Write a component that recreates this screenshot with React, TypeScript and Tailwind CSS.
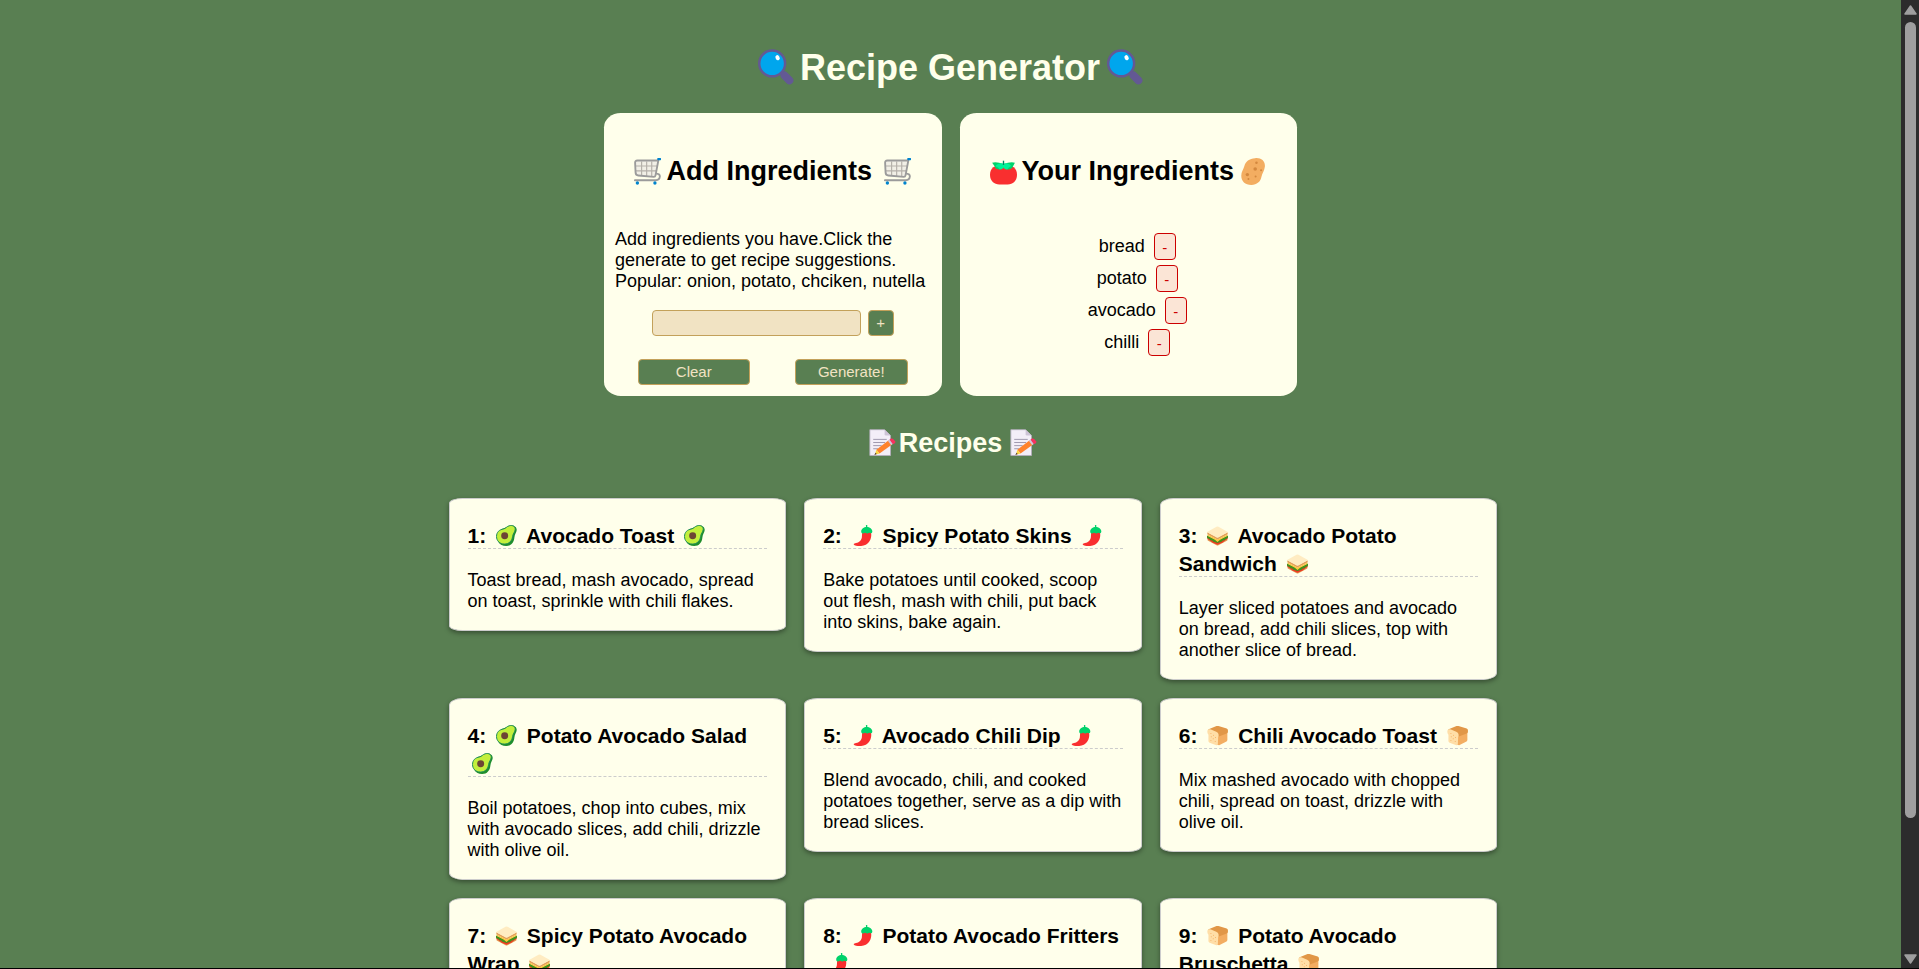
import type { ReactNode } from "react";

type IconProps = { className?: string };

function Svg({ className = "", children }: { className?: string; children: ReactNode }) {
  return (
    <svg viewBox="0 0 32 32" fill="none" className={`shrink-0 ${className}`} aria-hidden="true">
      {children}
    </svg>
  );
}

function Magnifier({ className }: IconProps) {
  return (
    <Svg className={className}>
      <path d="M21 21l2.6 2.6" stroke="#635994" strokeWidth="3" />
      <path d="M23.6 23.6l4.3 4.3" stroke="#635994" strokeWidth="7" strokeLinecap="round" />
      <circle cx="12.6" cy="12.8" r="11.5" fill="#00a6ed" stroke="#635994" strokeWidth="2.2" />
      <ellipse cx="17.4" cy="7.7" rx="1.8" ry="2.3" fill="#fff" transform="rotate(-30 17.4 7.7)" />
    </Svg>
  );
}

function Cart({ className }: IconProps) {
  return (
    <Svg className={className}>
      <path d="M2 3.5h26.5L26 22.3 5 20.6Q2.6 20.3 2.2 18Z" fill="#f1efe6" />
      <path
        d="M9 4v17M15 4v17.5M21 4v18M2 9.5h25.5M2.2 15.3h24.5"
        stroke="#b5b1aa"
        strokeWidth="1.4"
      />
      <path
        d="M28 3H4Q1.2 3 1.3 5.7l.6 12Q2.200 20.500 5 20.700l18.500 1.600q1.700 0 2-1.700L29.200 1.200"
        stroke="#9b9b9b"
        strokeWidth="2.200"
      />
      <path
        d="M27 18.500q4 .5 3.600 3.700-.5 4.200-4.600 4.200H1"
        stroke="#9b9b9b"
        strokeWidth="2.200"
        strokeLinecap="round"
      />
      <path d="M28.700 1.300h2.500" stroke="#0084ce" strokeWidth="2.600" strokeLinecap="round" />
      <circle cx="4" cy="29.700" r="2" fill="#0084ce" />
      <circle cx="24.800" cy="29.700" r="2" fill="#0084ce" />
    </Svg>
  );
}

function Tomato({ className }: IconProps) {
  return (
    <Svg className={className}>
      <path d="M0 20C0 12 5 8 16 8s16 4 16 12c0 7-5 11.300-11 11.300H11C5 31.300 0 27 0 20Z" fill="#f92f2f" />
      <path d="M2.500 5.500q6-1.300 13.500 1.800 7.500-3.100 13.500-1.800l-2 4q-1.500 4-6 4-3 .3-5.500-2.200-2.500 2.500-5.500 2.200-4.500 0-5-3.600Z" fill="#00d26a" />
      <path d="M16 6.500q6.500-1 9 3-3 1.500-4.500 4-3 .3-4.500-2.200-1.500 2.500-4.500 2.200-1.500-3-5-3.800 3-4.200 9.500-3.200Z" fill="#00f397" />
      <path d="M16 3.200v5" stroke="#008463" strokeWidth="1.600" />
    </Svg>
  );
}

function Potato({ className }: IconProps) {
  return (
    <Svg className={className}>
      <path
        d="M18 .2C25 -.5 30 3.5 29.5 10C29 15 26.5 17.5 25.5 22C24.500 28 20 32 13.500 32C6 32 1.500 27.500 1.500 21C1.500 16.500 4 13.500 5.200 9.500C6.500 4 11 .8 18 .2Z"
        fill="#f3ad61"
      />
      <g fill="#d3883e">
        <circle cx="19.500" cy="5.500" r="1.500" />
        <circle cx="18" cy="13" r="2.100" />
        <circle cx="25" cy="14.500" r="1.200" />
        <circle cx="8.700" cy="19.700" r="2" />
        <circle cx="18.500" cy="22" r="1.200" />
        <circle cx="10" cy="25" r="1.200" />
      </g>
    </Svg>
  );
}

function Memo({ className }: IconProps) {
  return (
    <Svg className={className}>
      <path d="M1 .8h17.500l7 7V31.400H1Z" fill="#f3eef8" stroke="#b4acbc" strokeWidth="1" />
      <path d="M18.500.8v5.500q0 1.500 1.500 1.500h5.500Z" fill="#cdc4d6" />
      <path d="M5 12.300h16M5 16h14M5 19.700h10M5 23.400h6" stroke="#9b93ab" strokeWidth="1.100" />
      <path d="M23.300 13.200l4 5.300L12.500 29 8.700 24.500Z" fill="#ff822d" />
      <path d="M8.700 24.500l3.800 4.500-5.500 1.500Z" fill="#fcd53f" />
      <path d="M7.800 28l1.300 1.700-2.800 1Z" fill="#402a32" />
      <path d="M22.300 13.900l2.200-1.600 4 5.300-2.200 1.600Z" fill="#d3c5dc" />
      <path d="M24.300 12.500l1.700-1.100q1.700-.7 2.900.6l2 2.500q.9 1.400-.4 2.400l-2.100 1.300Z" fill="#f8315f" />
    </Svg>
  );
}

function Avocado({ className }: IconProps) {
  return (
    <Svg className={className}>
      <path
        d="M22 1C27 -.2 32 3 31.500 8C31 12 28.500 14 28 19C27.500 26.500 23 32 15.500 32C10 32 6 30 3.500 26L9 6Z"
        fill="#1f8e2b"
      />
      <path
        d="M20 1.200C25 -.2 29.500 2 29.300 6.500C29 11 26 12.500 25.300 17.500C24.300 24.500 20 29 12.700 29C5.500 29 .8 24 .8 17.500C.8 11 5 7 11.500 6C15 5.200 16.500 2.200 20 1.200Z"
        fill="#c3ef3c"
        stroke="#1b8a58"
        strokeWidth="1.500"
      />
      <circle cx="13.200" cy="16.500" r="5.300" fill="#6d4534" />
    </Svg>
  );
}

function Chili({ className }: IconProps) {
  return (
    <Svg className={className}>
      <path d="M15.500 11q2-2 6-1.500t7.500 2c1.500 8-2 15-8 18.500C16 32.800 8 32.500 4 31c-2-.7-1.700-2.600 0-2.900 6-1 10-3.500 11-9Z" fill="#f92f2f" />
      <path d="M22.300.8v6" stroke="#00d26a" strokeWidth="2" strokeLinecap="round" />
      <path d="M14 10c0-4 4-6.800 8.500-6.800S31 6 31 10q0 3-2.500 2.600-2-1.600-3.500-.3-1.700 1.600-3.500 0-2-1.300-3.500.2Q14 14 14 10Z" fill="#00d26a" />
    </Svg>
  );
}

function Sandwich({ className }: IconProps) {
  return (
    <Svg className={className}>
      <path d="M1 21l15 7.500L31 21v2.500L17.500 31q-1.500.8-3 0L1 23.500Z" fill="#e39d54" />
      <path d="M.5 17.500L16 24l15.500-6.500v4L27 24l-3 2.500L16 30l-8-3.500L5 24 .5 21.500Z" fill="#f03a25" />
      <path d="M0 16l16 7.500L32 16v3.500q-1.500 2-3.500 1.700Q27 24 24 23.700q-2 3.300-5 2.600-3 2-6 0-3.500.6-5-2.600-3 .3-4.500-2.500Q1 21 0 19.500Z" fill="#44911b" />
      <path d="M1 14.500l15 7.500 15-7.500v2L20 22.500 16 26l-4-3.500L1 16.500Z" fill="#ffc83d" />
      <path d="M.5 11L16 18.500 31.500 11v3L16 22 .5 14Z" fill="#e39d54" />
      <path d="M.8 10.200L14.500 2.500q1.500-.8 3 0l13.700 7.700q.8.700 0 1.300L17.500 19q-1.500.8-3 0L.8 11.500Q0 10.800.8 10.200Z" fill="#ffecc2" />
    </Svg>
  );
}

function Bread({ className }: IconProps) {
  return (
    <Svg className={className}>
      <path d="M16 13.500L31 9v14q0 1.500-1.300 2.300L18.500 31 15 30Z" fill="#f3ad61" />
      <path d="M1.500 7L14.500 1.700q1.500-.6 3 0L30 5.500q2 .8 2 3.500 0 3-2 4l-12 4.500-4-4Z" fill="#e19747" />
      <path d="M.5 9.500C.7 6.500 3 5.700 6 7l8 3.200c4 1.600 4.500 6 3 8.300L16.500 29.500q-.3 2-2.300 1.400L4 27q-1.800-.8-1.800-2.700V15Q.3 12.500.5 9.500Z" fill="#ffdea7" />
      <g fill="#f3ad61">
        <circle cx="6" cy="13" r=".8" />
        <circle cx="10" cy="15.500" r=".8" />
        <circle cx="6.500" cy="18" r=".8" />
        <circle cx="13" cy="19" r=".8" />
        <circle cx="9.500" cy="21" r=".8" />
        <circle cx="6" cy="23.500" r=".8" />
        <circle cx="12.500" cy="25" r=".8" />
      </g>
    </Svg>
  );
}

type Icon = (props: IconProps) => ReactNode;

type Recipe = {
  icon: Icon;
  /** Each entry is one heading line; "*" marks where the icon goes. */
  title: string[];
  text: string[];
};

const recipes: Recipe[] = [
  { icon: Avocado, title: ["* Avocado Toast *"], text: ["Toast bread, mash avocado, spread", "on toast, sprinkle with chili flakes."] },
  { icon: Chili, title: ["* Spicy Potato Skins *"], text: ["Bake potatoes until cooked, scoop", "out flesh, mash with chili, put back", "into skins, bake again."] },
  { icon: Sandwich, title: ["* Avocado Potato", "Sandwich *"], text: ["Layer sliced potatoes and avocado", "on bread, add chili slices, top with", "another slice of bread."] },
  { icon: Avocado, title: ["* Potato Avocado Salad", "*"], text: ["Boil potatoes, chop into cubes, mix", "with avocado slices, add chili, drizzle", "with olive oil."] },
  { icon: Chili, title: ["* Avocado Chili Dip *"], text: ["Blend avocado, chili, and cooked", "potatoes together, serve as a dip with", "bread slices."] },
  { icon: Bread, title: ["* Chili Avocado Toast *"], text: ["Mix mashed avocado with chopped", "chili, spread on toast, drizzle with", "olive oil."] },
  { icon: Sandwich, title: ["* Spicy Potato Avocado", "Wrap *"], text: [] },
  { icon: Chili, title: ["* Potato Avocado Fritters", "*"], text: [] },
  { icon: Bread, title: ["* Potato Avocado", "Bruschetta *"], text: [] },
];

const ingredients = ["bread", "potato", "avocado", "chilli"];

function TitleLine({ line, icon: IconMark }: { line: string; icon: Icon }) {
  return (
    <>
      {line.split("*").map((part, i) => (
        <span key={i}>
          {i > 0 && <IconMark className="mr-[4px] ml-[4px] inline-block size-[21px] align-[-3px]" />}
          {part}
        </span>
      ))}
    </>
  );
}

function RecipeCard({ recipe, index }: { recipe: Recipe; index: number }) {
  return (
    <article className="rounded-[4%] border border-[#cccccc] bg-[#ffffeb] px-[18px] pt-[23px] pb-[18px] whitespace-nowrap text-black shadow-[0_2px_5px_rgba(0,0,0,0.4)]">
      <h3
        className={`border-b border-dashed border-[#cccccc] text-[21px] leading-[28px] font-bold ${
          recipe.title.length > 1 ? "h-[55px]" : "h-[27px]"
        }`}
      >
        {recipe.title.map((line, i) => (
          <span key={i} className="block h-[28px]">
            {i === 0 && `${index + 1}: `}
            <TitleLine line={line} icon={recipe.icon} />
          </span>
        ))}
      </h3>
      <p className="mt-[21px] min-h-[42px] text-[18px] leading-[21px]">
        {recipe.text.map((line) => (
          <span key={line} className="block">
            {line}
          </span>
        ))}
      </p>
    </article>
  );
}

function Scrollbar() {
  return (
    <div className="flex w-[18px] shrink-0 flex-col items-center bg-[#2c2c2c] pt-[5px] pb-[4px]">
      <svg viewBox="0 0 13 10" className="h-[10px] w-[13px] shrink-0" aria-hidden="true">
        <path d="M6.500 1L12 9H1Z" fill="#9f9f9f" stroke="#9f9f9f" strokeWidth="1.500" strokeLinejoin="round" />
      </svg>
      <div className="mt-[7px] h-[796px] w-[11px] rounded-full bg-[#9f9f9f]" />
      <svg viewBox="0 0 13 10" className="mt-auto h-[10px] w-[13px] shrink-0" aria-hidden="true">
        <path d="M6.500 9L1 1h11Z" fill="#9f9f9f" stroke="#9f9f9f" strokeWidth="1.500" strokeLinejoin="round" />
      </svg>
    </div>
  );
}

export default function App() {
  return (
    <div className="h-[969px] w-[1919px] overflow-hidden border-b border-black bg-[#597f52] font-['Liberation_Sans',Arial,sans-serif] text-[18px] leading-[21px]">
      <div className="flex h-full">
        <main className="flex h-full w-[1901px] flex-col items-center overflow-hidden">
          <h1 className="mt-[47px] flex h-[41px] shrink-0 items-start text-[36px] leading-[41px] font-bold whitespace-nowrap text-[#ffffeb]">
            <Magnifier className="mt-[2px] mr-[6px] size-[36px]" />
            Recipe Generator
            <Magnifier className="mt-[2px] ml-[7px] size-[36px]" />
          </h1>

          <div className="mt-[25px] flex h-[283px] w-[693px] shrink-0 gap-[18px] text-black">
            <section className="w-[337.5px] rounded-[5%] bg-[#ffffeb] pt-[42px]">
              <h2 className="flex h-[31px] items-start justify-center text-[27px] leading-[33px] font-bold whitespace-nowrap">
                <Cart className="mt-[3px] mr-[5px] size-[27px]" />
                Add Ingredients
                <Cart className="mt-[3px] ml-[12px] size-[27px]" />
              </h2>
              <p className="mt-[43px] pl-[11px] whitespace-nowrap">
                Add ingredients you have.Click the
                <br />
                generate to get recipe suggestions.
                <br />
                Popular: onion, potato, chciken, nutella
              </p>
              <div className="mt-[18px] flex justify-center gap-[7px]">
                <input className="h-[26px] w-[209px] rounded-[4px] border border-[#c3a15a] bg-[#f1e3c3] px-2 text-[15px] outline-none" />
                <button className="h-[26px] w-[26px] rounded-[4px] border border-[#c3a15a] bg-[#597f52] text-[15px] leading-[24px] text-[#f1e3c3]">
                  +
                </button>
              </div>
              <div className="mt-[23px] flex justify-center gap-[45px] text-[15px] leading-[24px] text-[#f1e3c3]">
                <button className="h-[26px] w-[112px] rounded-[4px] border border-[#c3a15a] bg-[#597f52]">Clear</button>
                <button className="h-[26px] w-[113px] rounded-[4px] border border-[#c3a15a] bg-[#597f52]">Generate!</button>
              </div>
            </section>

            <section className="w-[337.5px] rounded-[5%] bg-[#ffffeb] pt-[42px]">
              <h2 className="flex h-[31px] items-start justify-center pl-[1px] text-[27px] leading-[33px] font-bold whitespace-nowrap">
                <Tomato className="mt-[3px] mr-[4px] size-[27px]" />
                Your Ingredients
                <Potato className="mt-[3px] ml-[6px] size-[27px]" />
              </h2>
              <ul className="mt-[47px] flex flex-col gap-[5px] pl-[18px]">
                {ingredients.map((name) => (
                  <li key={name} className="flex h-[27px] items-start justify-center gap-[9px]">
                    <span className="mt-[3px]">{name}</span>
                    <button className="h-[27px] w-[22px] rounded-[4px] border border-[#cc0000] bg-[#fbe5d6] text-[15px] leading-[27px] text-[#cc0000]">
                      -
                    </button>
                  </li>
                ))}
              </ul>
            </section>
          </div>

          <h2 className="mt-[31px] flex h-[31px] shrink-0 items-start pl-[5px] text-[27px] leading-[33px] font-bold whitespace-nowrap text-[#ffffeb]">
            <Memo className="mt-[2px] mr-[3px] size-[27px]" />
            Recipes
            <Memo className="mt-[2px] ml-[8px] size-[27px]" />
          </h2>

          <div className="mt-[40px] ml-[45px] grid w-[1049px] shrink-0 auto-rows-[182px] grid-cols-3 items-start gap-[18px]">
            {recipes.map((recipe, i) => (
              <RecipeCard key={i} recipe={recipe} index={i} />
            ))}
          </div>
        </main>
        <Scrollbar />
      </div>
    </div>
  );
}
